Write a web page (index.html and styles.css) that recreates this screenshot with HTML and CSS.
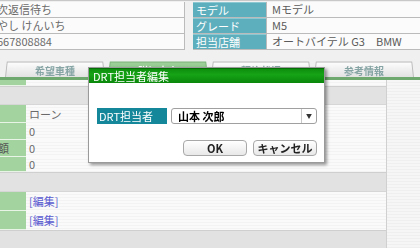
FILE: index.html
```html
<!DOCTYPE html>
<html lang="ja">
<head>
    <meta charset="UTF-8">
    <title>DRT担当者編集</title>
    <link rel="stylesheet" href="styles.css">
</head>
<body>

    <div class="info">
        <div class="info-left">
            <div class="cell"><span class="cut">次返信待ち</span></div>
            <div class="cell"><span class="cut">やし けんいち</span></div>
            <div class="cell"><span class="cut">667808884</span></div>
        </div>
        <div class="info-right">
            <div class="row"><div class="lbl">モデル</div><div class="val">Mモデル</div></div>
            <div class="row"><div class="lbl">グレード</div><div class="val">M5</div></div>
            <div class="row"><div class="lbl">担当店舗</div><div class="val">オートバイテル G3　BMW</div></div>
        </div>
    </div>

    <div class="tabs">
        <div class="tab">希望車種</div>
        <div class="tab active">詳細内容</div>
        <div class="tab">契約状況</div>
        <div class="tab">参考情報</div>
    </div>
    <div class="tab-line"></div>

    <div class="content">
        <div class="main">
            <div class="grid-row thin"><div class="g-lbl"></div><div class="g-val"></div></div>
            <div class="bar"></div>
            <div class="grid-row h18"><div class="g-lbl"></div><div class="g-val">ローン</div></div>
            <div class="grid-row"><div class="g-lbl"></div><div class="g-val">0</div></div>
            <div class="grid-row"><div class="g-lbl"><span class="cut-lbl">金額</span></div><div class="g-val">0</div></div>
            <div class="grid-row h15"><div class="g-lbl"></div><div class="g-val">0</div></div>
            <div class="bar tall"></div>
            <div class="grid-row h19"><div class="g-lbl"></div><div class="g-val"><a href="#">[編集]</a></div></div>
            <div class="grid-row h19"><div class="g-lbl"></div><div class="g-val"><a href="#">[編集]</a></div></div>
            <div class="bar"></div>
        </div>
        <div class="side"></div>
    </div>

    <div class="dialog">
        <div class="dialog-title">DRT担当者編集</div>
        <div class="dialog-body">
            <div class="field">
                <div class="field-lbl">DRT担当者</div>
                <div class="select">
                    <span class="select-text">山本 次郎</span>
                    <span class="select-arrow">▼</span>
                </div>
            </div>
            <div class="buttons">
                <button class="btn">OK</button>
                <button class="btn">キャンセル</button>
            </div>
        </div>
    </div>

</body>
</html>
```

FILE: styles.css
```css
* {
    margin: 0;
    padding: 0;
    box-sizing: border-box;
}

body {
    background-color: #f0f0f0;
    color: #555;
    font-family: 'Noto Sans CJK JP', 'DejaVu Sans', sans-serif;
    font-size: 11px;
    line-height: 1;
    width: 420px;
    height: 248px;
    overflow: hidden;
    position: relative;
}

/* 上部の基本情報 */
.info {
    display: flex;
    gap: 8px;
    height: 50px;
    padding-top: 1px;
    border-top: 1px solid #c8c8c8;
}

.info-left {
    width: 185px;
    border-right: 1px solid #bbb;
    border-bottom: 1px solid #bbb;
    background-color: #fbfbfb;
}

.cell {
    height: 16px;
    border-top: 1px solid #bbb;
    display: flex;
    align-items: center;
    overflow: hidden;
    color: #6a6a6a;
}

.cell:first-child {
    border-top: none;
    height: 15px;
}

.cut {
    margin-left: -3px;
    white-space: nowrap;
}

.info-right {
    flex: 1;
    border-bottom: 1px solid #bbb;
}

.info-right .row {
    display: flex;
    height: 16px;
    border-top: 1px solid #bbb;
}

.info-right .row:first-child {
    border-top: none;
    height: 15px;
}

.lbl {
    width: 73px;
    background-color: #5eafbe;
    color: #fff;
    padding-left: 3px;
    display: flex;
    align-items: center;
    border-top: 1px solid #8cc8d2;
}

.val {
    flex: 1;
    background-color: #fbfbfb;
    border-left: 1px solid #bbb;
    padding-left: 5px;
    display: flex;
    align-items: center;
    color: #5a5a5a;
    white-space: nowrap;
}

/* タブ */
.tabs {
    display: flex;
    gap: 3px;
    padding-left: 5px;
    margin-top: 11px;
    height: 16px;
}

.tab {
    position: relative;
    width: 100px;
    text-align: center;
    color: #86a4a4;
    font-size: 10px;
    font-weight: bold;
    padding-top: 5px;
    z-index: 0;
}

.tab::before {
    content: '';
    position: absolute;
    top: 0;
    left: 0;
    right: 0;
    bottom: 0;
    z-index: -1;
    border: 1px solid #bcbcbc;
    border-bottom: none;
    background: linear-gradient(#fdfdfd, #e2e2e2);
    transform: perspective(30px) rotateX(4deg);
    transform-origin: bottom;
}

.tab.active {
    color: #fff;
}

.tab.active::before {
    background: linear-gradient(#9ed09a, #7fbd7d);
    border-color: #7cb57a;
}

.tab-line {
    height: 3px;
    background-color: #6fa86e;
}

/* 詳細エリア */
.content {
    display: flex;
}

.main {
    width: 387px;
    border-right: 1px solid #d0d0d0;
}

.side {
    flex: 1;
    background: repeating-linear-gradient(#f6f6f6 0, #f6f6f6 2px, #efefef 2px, #efefef 3px);
}

.bar {
    height: 19px;
    background-color: #e2e2e2;
    border-top: 1px solid #cfcfcf;
    border-bottom: 1px solid #d6d6d6;
}

.bar.tall {
    height: 20px;
}

.grid-row {
    display: flex;
    height: 17px;
}

.grid-row.thin {
    height: 6px;
}

.grid-row.h18 { height: 18px; }
.grid-row.h19 { height: 19px; }
.grid-row.h15 { height: 15px; }

.g-lbl {
    width: 26px;
    background-color: #a3d39e;
    border-bottom: 1px solid #e8f4e6;
    overflow: hidden;
    display: flex;
    align-items: center;
    color: #555;
}

.cut-lbl {
    margin-left: -13px;
    white-space: nowrap;
}

.g-val {
    flex: 1;
    background: repeating-linear-gradient(#fafafa 0, #fafafa 2px, #f3f3f3 2px, #f3f3f3 3px);
    padding-left: 3px;
    display: flex;
    align-items: center;
    color: #6a6a6a;
}

.g-val a {
    color: #5a5ad0;
    text-decoration: none;
}

/* ダイアログ */
.dialog {
    position: absolute;
    left: 88px;
    top: 67px;
    width: 237px;
    height: 96px;
    background-color: #fff;
    border: 1px solid #9a9a9a;
    box-shadow: 2px 2px 3px rgba(0, 0, 0, 0.4);
}

.dialog-title {
    height: 15px;
    background: linear-gradient(#0e8f0e, #16a316 40%, #0a870a);
    border-top: 1px solid #066e06;
    color: #fff;
    padding-left: 4px;
    display: flex;
    align-items: center;
    font-size: 11px;
}

.dialog-body {
    padding: 25px 7px 0 8px;
}

.field {
    display: flex;
    gap: 4px;
    height: 16px;
}

.field-lbl {
    width: 70px;
    background-color: #14879b;
    color: #fff;
    padding-left: 2px;
    display: flex;
    align-items: center;
}

.select {
    flex: 1;
    display: flex;
    align-items: center;
    border: 1px solid #a0a0a0;
    border-radius: 3px;
    background-color: #fff;
}

.select-text {
    flex: 1;
    padding-left: 6px;
    color: #000;
    font-weight: bold;
}

.select-arrow {
    width: 15px;
    height: 100%;
    border-left: 1px solid #c8c8c8;
    font-size: 6px;
    color: #333;
    display: flex;
    align-items: center;
    justify-content: center;
}

.buttons {
    display: flex;
    justify-content: flex-end;
    gap: 6px;
    margin-top: 16px;
}

.btn {
    width: 64px;
    height: 16px;
    border: 1px solid #a8a8a8;
    border-radius: 4px;
    background: linear-gradient(#ffffff, #e8e8e8);
    font-family: inherit;
    font-size: 11px;
    font-weight: bold;
    color: #222;
    line-height: 1;
}
```
